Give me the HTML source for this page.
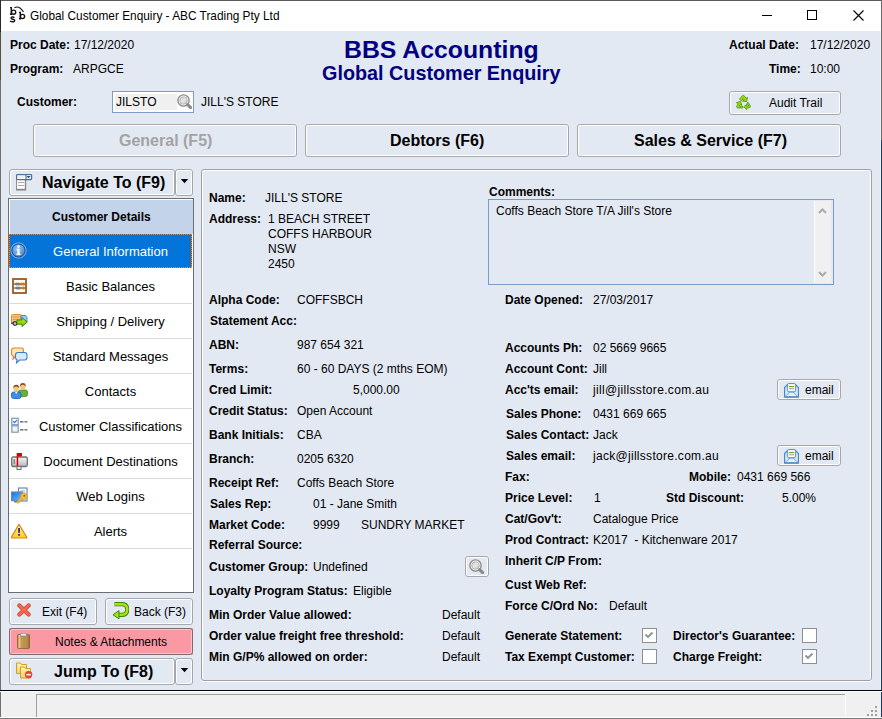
<!DOCTYPE html>
<html><head><meta charset="utf-8"><style>
html,body{margin:0;padding:0;width:882px;height:719px;overflow:hidden;}
body{position:relative;font-family:"Liberation Sans",sans-serif;color:#000;}
.r{position:absolute;}
.t{position:absolute;white-space:pre;line-height:1;}
</style></head><body>
<div class="r" style="left:0px;top:0px;width:882px;height:719px;background:#F0F0F0;"></div>
<div class="r" style="left:0px;top:0px;width:882px;height:31px;background:#FFFFFF;"></div>
<div class="r" style="left:0px;top:31px;width:882px;height:659px;background:#E3E9F3;"></div>
<div class="r" style="left:0px;top:0px;width:882px;height:1px;background:#5A5A5A;"></div>
<div class="r" style="left:0px;top:0px;width:1px;height:719px;background:#707070;"></div>
<div class="r" style="left:0px;top:0px;width:1px;height:32px;background:#2A2A2A;"></div>
<div class="r" style="left:0px;top:32px;width:1px;height:48px;background:#5A5238;"></div>
<div class="r" style="left:881px;top:0px;width:1px;height:140px;background:#6A6A6A;"></div>
<div class="r" style="left:881px;top:140px;width:1px;height:579px;background:#1E3A64;"></div>
<div class="r" style="left:880px;top:31px;width:1px;height:659px;background:#EEF3FB;"></div>
<div class="r" style="left:0px;top:690px;width:882px;height:1px;background:#000;"></div>
<div class="r" style="left:0px;top:691px;width:882px;height:1px;background:#FFF;"></div>
<div class="r" style="left:0px;top:717px;width:882px;height:1px;background:#FFF;"></div>
<div class="r" style="left:0px;top:718px;width:882px;height:1px;background:#7A7A7A;"></div>
<svg class="r" style="left:6px;top:4px" width="24" height="22" viewBox="0 0 24 22"><g fill="none" stroke="#111" stroke-width="1.4"><path d="M4 3.6 H5.3 V10.3 H4"/><circle cx="7.6" cy="8.2" r="2.1"/><path d="M13 8.4 H14.3 V14.7 H13"/><circle cx="16.5" cy="12.5" r="2.1"/><path d="M8.5 3.8 Q13 1 17.5 8" stroke-width="1.2"/><path d="M8.5 13.6 Q7 12.6 5.5 13.2 Q4.3 14.2 6 15 L8 15.6 Q9.5 16.6 8 17.6 Q6 18.2 4 17"/></g></svg>
<div class="t" style="left:30px;top:11px;font-size:11.85px;color:#000;">Global Customer Enquiry - ABC Trading Pty Ltd</div>
<div class="r" style="left:762px;top:15px;width:10px;height:1px;background:#000;"></div>
<div class="r" style="left:807px;top:10px;width:10px;height:10px;border:1px solid #000;box-sizing:border-box;"></div>
<svg class="r" style="left:853px;top:10px" width="11" height="11" viewBox="0 0 11 11"><path d="M0.5 0.5 L10.5 10.5 M10.5 0.5 L0.5 10.5" stroke="#000" stroke-width="1.1"/></svg>
<div class="t" style="left:10px;top:39px;font-size:12px;font-weight:bold;">Proc Date:</div>
<div class="t" style="left:74px;top:39px;font-size:12px;">17/12/2020</div>
<div class="t" style="left:10px;top:63px;font-size:12px;font-weight:bold;">Program:</div>
<div class="t" style="left:73px;top:63px;font-size:12px;">ARPGCE</div>
<div class="t" style="left:344px;top:38px;font-size:24.8px;font-weight:bold;color:#000080;">BBS Accounting</div>
<div class="t" style="left:322px;top:64px;font-size:19.8px;font-weight:bold;color:#000080;">Global Customer Enquiry</div>
<div class="t" style="left:729px;top:39px;font-size:12px;font-weight:bold;">Actual Date:</div>
<div class="t" style="left:810px;top:39px;font-size:12px;">17/12/2020</div>
<div class="t" style="left:769px;top:63px;font-size:12px;font-weight:bold;">Time:</div>
<div class="t" style="left:810px;top:63px;font-size:12px;">10:00</div>
<div class="t" style="left:17px;top:96px;font-size:12px;font-weight:bold;">Customer:</div>
<div class="r" style="left:112px;top:91px;width:82px;height:22px;border:1px solid #7A9CC6;box-sizing:border-box;background:#FFF;"></div>
<div class="r" style="left:115px;top:94px;width:62px;height:16px;background:#F0F0F0;"></div>
<div class="t" style="left:116px;top:96px;font-size:12px;">JILSTO</div>
<div class="t" style="left:201px;top:96px;font-size:12px;">JILL'S STORE</div>
<div class="r" style="left:729px;top:91px;width:112px;height:24px;border:1px solid #A8A8A8;border-radius:3px;box-sizing:border-box;background:#E3E9F3;box-shadow:inset 1px 1px 0 #FFF, inset -1px -1px 0 #FFF;"></div>
<div class="t" style="left:769px;top:97px;font-size:12px;">Audit Trail</div>
<div class="r" style="left:33px;top:124px;width:264px;height:33px;border:1px solid #A8A8A8;border-radius:3px;box-sizing:border-box;background:#E3E9F3;box-shadow:inset 1px 1px 0 #FFF, inset -1px -1px 0 #FFF;"></div>
<div class="r" style="left:305px;top:124px;width:264px;height:33px;border:1px solid #A8A8A8;border-radius:3px;box-sizing:border-box;background:#E3E9F3;box-shadow:inset 1px 1px 0 #FFF, inset -1px -1px 0 #FFF;"></div>
<div class="r" style="left:577px;top:124px;width:264px;height:33px;border:1px solid #A8A8A8;border-radius:3px;box-sizing:border-box;background:#E3E9F3;box-shadow:inset 1px 1px 0 #FFF, inset -1px -1px 0 #FFF;"></div>
<div class="t" style="left:119px;top:133px;font-size:16px;font-weight:bold;color:#A3A3A3;">General (F5)</div>
<div class="t" style="left:390px;top:133px;font-size:16px;font-weight:bold;">Debtors (F6)</div>
<div class="t" style="left:634px;top:133px;font-size:16px;font-weight:bold;">Sales &amp; Service (F7)</div>
<div class="r" style="left:9px;top:169px;width:166px;height:27px;border:1px solid #A8A8A8;border-radius:3px;box-sizing:border-box;background:#E3E9F3;box-shadow:inset 1px 1px 0 #FFF, inset -1px -1px 0 #FFF;"></div>
<div class="r" style="left:175px;top:169px;width:18px;height:27px;border:1px solid #A8A8A8;border-radius:3px;box-sizing:border-box;background:#E3E9F3;box-shadow:inset 1px 1px 0 #FFF, inset -1px -1px 0 #FFF;"></div>
<div class="t" style="left:42px;top:175px;font-size:16px;font-weight:bold;">Navigate To (F9)</div>
<svg class="r" style="left:180px;top:179px" width="9" height="5"><path d="M0.8 0 H8.2 L4.5 4.2Z" fill="#000"/></svg>
<div class="r" style="left:8px;top:198px;width:186px;height:395px;border:1px solid #6D6D6D;box-sizing:border-box;background:#FFF;"></div>
<div class="r" style="left:9px;top:199px;width:184px;height:35px;background:#C3D3E9;box-shadow:inset 1px 1px 0 #FFF;"></div>
<div class="t" style="left:52px;top:211px;font-size:12px;font-weight:bold;">Customer Details</div>
<div class="r" style="left:9px;top:234px;width:183px;height:34px;background:#0574D8;"></div>
<div class="r" style="left:9px;top:234px;width:183px;height:1px;background:repeating-linear-gradient(90deg,#FF8A1E 0 1px,transparent 1px 2px);"></div>
<div class="r" style="left:9px;top:267px;width:183px;height:1px;background:repeating-linear-gradient(90deg,#FF8A1E 0 1px,transparent 1px 2px);"></div>
<div class="r" style="left:9px;top:234px;width:1px;height:34px;background:repeating-linear-gradient(180deg,#FF8A1E 0 1px,transparent 1px 2px);"></div>
<div class="r" style="left:191px;top:234px;width:1px;height:34px;background:repeating-linear-gradient(180deg,#FF8A1E 0 1px,transparent 1px 2px);"></div>
<div class="t" style="left:29px;width:163px;text-align:center;top:245px;font-size:13px;color:#FFF">General Information</div>
<div class="r" style="left:9px;top:303px;width:183px;height:1px;background:#DADADA;"></div>
<div class="t" style="left:29px;width:163px;text-align:center;top:280px;font-size:13px;color:#000">Basic Balances</div>
<div class="r" style="left:9px;top:338px;width:183px;height:1px;background:#DADADA;"></div>
<div class="t" style="left:29px;width:163px;text-align:center;top:315px;font-size:13px;color:#000">Shipping / Delivery</div>
<div class="r" style="left:9px;top:373px;width:183px;height:1px;background:#DADADA;"></div>
<div class="t" style="left:29px;width:163px;text-align:center;top:350px;font-size:13px;color:#000">Standard Messages</div>
<div class="r" style="left:9px;top:408px;width:183px;height:1px;background:#DADADA;"></div>
<div class="t" style="left:29px;width:163px;text-align:center;top:385px;font-size:13px;color:#000">Contacts</div>
<div class="r" style="left:9px;top:443px;width:183px;height:1px;background:#DADADA;"></div>
<div class="t" style="left:29px;width:163px;text-align:center;top:420px;font-size:13px;color:#000">Customer Classifications</div>
<div class="r" style="left:9px;top:478px;width:183px;height:1px;background:#DADADA;"></div>
<div class="t" style="left:29px;width:163px;text-align:center;top:455px;font-size:13px;color:#000">Document Destinations</div>
<div class="r" style="left:9px;top:513px;width:183px;height:1px;background:#DADADA;"></div>
<div class="t" style="left:29px;width:163px;text-align:center;top:490px;font-size:13px;color:#000">Web Logins</div>
<div class="r" style="left:9px;top:548px;width:183px;height:1px;background:#DADADA;"></div>
<div class="t" style="left:29px;width:163px;text-align:center;top:525px;font-size:13px;color:#000">Alerts</div>
<div class="r" style="left:9px;top:598px;width:88px;height:27px;border:1px solid #A8A8A8;border-radius:3px;box-sizing:border-box;background:#E3E9F3;box-shadow:inset 1px 1px 0 #FFF, inset -1px -1px 0 #FFF;"></div>
<div class="r" style="left:105px;top:598px;width:88px;height:27px;border:1px solid #A8A8A8;border-radius:3px;box-sizing:border-box;background:#E3E9F3;box-shadow:inset 1px 1px 0 #FFF, inset -1px -1px 0 #FFF;"></div>
<div class="r" style="left:9px;top:628px;width:184px;height:27px;background:#FA98A3;"></div>
<div class="r" style="left:9px;top:628px;width:184px;height:27px;border:1px solid #7C6A6C;border-radius:3px;box-sizing:border-box;box-shadow:inset 1px 1px 0 #FFC4CC, inset -1px -1px 0 #FFC4CC;"></div>
<div class="r" style="left:9px;top:658px;width:166px;height:27px;border:1px solid #A8A8A8;border-radius:3px;box-sizing:border-box;background:#E3E9F3;box-shadow:inset 1px 1px 0 #FFF, inset -1px -1px 0 #FFF;"></div>
<div class="r" style="left:175px;top:658px;width:18px;height:27px;border:1px solid #A8A8A8;border-radius:3px;box-sizing:border-box;background:#E3E9F3;box-shadow:inset 1px 1px 0 #FFF, inset -1px -1px 0 #FFF;"></div>
<div class="t" style="left:42px;top:606px;font-size:12px;">Exit (F4)</div>
<div class="t" style="left:134px;top:606px;font-size:12px;">Back (F3)</div>
<div class="t" style="left:55px;top:636px;font-size:12px;">Notes &amp; Attachments</div>
<div class="t" style="left:54px;top:664px;font-size:16px;font-weight:bold;">Jump To (F8)</div>
<svg class="r" style="left:180px;top:668px" width="9" height="5"><path d="M0.8 0 H8.2 L4.5 4.2Z" fill="#000"/></svg>
<div class="r" style="left:201px;top:169px;width:671px;height:512px;border:1px solid #A0A0A0;border-radius:3px;box-sizing:border-box;box-shadow:inset 1px 1px 0 #FFF, inset -1px 0 0 #FFF, 0 1px 0 #FFF;"></div>
<div class="t" style="left:209px;top:192px;font-size:12px;font-weight:bold;">Name:</div>
<div class="t" style="left:265px;top:192px;font-size:12px;">JILL'S STORE</div>
<div class="t" style="left:209px;top:213px;font-size:12px;font-weight:bold;">Address:</div>
<div class="t" style="left:268px;top:213px;font-size:12px;">1 BEACH STREET</div>
<div class="t" style="left:268px;top:228px;font-size:12px;">COFFS HARBOUR</div>
<div class="t" style="left:268px;top:243px;font-size:12px;">NSW</div>
<div class="t" style="left:268px;top:258px;font-size:12px;">2450</div>
<div class="t" style="left:209px;top:294px;font-size:12px;font-weight:bold;">Alpha Code:</div>
<div class="t" style="left:297px;top:294px;font-size:12px;">COFFSBCH</div>
<div class="t" style="left:210px;top:315px;font-size:12px;font-weight:bold;">Statement Acc:</div>
<div class="t" style="left:209px;top:339px;font-size:12px;font-weight:bold;">ABN:</div>
<div class="t" style="left:297px;top:339px;font-size:12px;">987 654 321</div>
<div class="t" style="left:209px;top:363px;font-size:12px;font-weight:bold;">Terms:</div>
<div class="t" style="left:297px;top:363px;font-size:12px;">60 - 60 DAYS (2 mths EOM)</div>
<div class="t" style="left:209px;top:384px;font-size:12px;font-weight:bold;">Cred Limit:</div>
<div class="t" style="left:353px;top:384px;font-size:12px;">5,000.00</div>
<div class="t" style="left:209px;top:405px;font-size:12px;font-weight:bold;">Credit Status:</div>
<div class="t" style="left:297px;top:405px;font-size:12px;">Open Account</div>
<div class="t" style="left:209px;top:429px;font-size:12px;font-weight:bold;">Bank Initials:</div>
<div class="t" style="left:297px;top:429px;font-size:12px;">CBA</div>
<div class="t" style="left:209px;top:453px;font-size:12px;font-weight:bold;">Branch:</div>
<div class="t" style="left:297px;top:453px;font-size:12px;">0205 6320</div>
<div class="t" style="left:209px;top:477px;font-size:12px;font-weight:bold;">Receipt Ref:</div>
<div class="t" style="left:297px;top:477px;font-size:12px;">Coffs Beach Store</div>
<div class="t" style="left:210px;top:498px;font-size:12px;font-weight:bold;">Sales Rep:</div>
<div class="t" style="left:313px;top:498px;font-size:12px;">01 - Jane Smith</div>
<div class="t" style="left:209px;top:519px;font-size:12px;font-weight:bold;">Market Code:</div>
<div class="t" style="left:313px;top:519px;font-size:12px;">9999</div>
<div class="t" style="left:361px;top:519px;font-size:12px;">SUNDRY MARKET</div>
<div class="t" style="left:209px;top:539px;font-size:12px;font-weight:bold;">Referral Source:</div>
<div class="t" style="left:209px;top:561px;font-size:12px;font-weight:bold;">Customer Group:</div>
<div class="t" style="left:313px;top:561px;font-size:12px;">Undefined</div>
<div class="r" style="left:465px;top:556px;width:24px;height:21px;border:1px solid #A8A8A8;border-radius:3px;box-sizing:border-box;background:#E3E9F3;box-shadow:inset 1px 1px 0 #FFF, inset -1px -1px 0 #FFF;"></div>
<div class="t" style="left:209px;top:585px;font-size:12px;font-weight:bold;">Loyalty Program Status:</div>
<div class="t" style="left:353px;top:585px;font-size:12px;">Eligible</div>
<div class="t" style="left:209px;top:609px;font-size:12px;font-weight:bold;">Min Order Value allowed:</div>
<div class="t" style="left:442px;top:609px;font-size:12px;">Default</div>
<div class="t" style="left:209px;top:630px;font-size:12px;font-weight:bold;">Order value freight free threshold:</div>
<div class="t" style="left:442px;top:630px;font-size:12px;">Default</div>
<div class="t" style="left:209px;top:651px;font-size:12px;font-weight:bold;">Min G/P% allowed on order:</div>
<div class="t" style="left:442px;top:651px;font-size:12px;">Default</div>
<div class="t" style="left:489px;top:186px;font-size:12px;font-weight:bold;">Comments:</div>
<div class="r" style="left:488px;top:199px;width:346px;height:86px;border:1px solid #7A9CC6;box-sizing:border-box;background:#E3E9F3;"></div>
<div class="r" style="left:814px;top:201px;width:1px;height:82px;background:#FFF;"></div>
<div class="r" style="left:815px;top:201px;width:16px;height:82px;background:#F0F0F0;"></div>
<svg class="r" style="left:818px;top:207px" width="10" height="8"><path d="M1 6 L4.5 2.5 L8 6" stroke="#ABABAB" stroke-width="2" fill="none"/></svg>
<svg class="r" style="left:818px;top:270px" width="10" height="8"><path d="M1 2 L4.5 5.5 L8 2" stroke="#ABABAB" stroke-width="2" fill="none"/></svg>
<div class="t" style="left:496px;top:205px;font-size:12px;">Coffs Beach Store T/A Jill's Store</div>
<div class="t" style="left:505px;top:294px;font-size:12px;font-weight:bold;">Date Opened:</div>
<div class="t" style="left:593px;top:294px;font-size:12px;">27/03/2017</div>
<div class="t" style="left:505px;top:342px;font-size:12px;font-weight:bold;">Accounts Ph:</div>
<div class="t" style="left:593px;top:342px;font-size:12px;">02 5669 9665</div>
<div class="t" style="left:505px;top:363px;font-size:12px;font-weight:bold;">Account Cont:</div>
<div class="t" style="left:593px;top:363px;font-size:12px;">Jill</div>
<div class="t" style="left:505px;top:384px;font-size:12px;font-weight:bold;">Acc'ts email:</div>
<div class="t" style="left:593px;top:384px;font-size:12px;letter-spacing:0.33px;">jill@jillsstore.com.au</div>
<div class="t" style="left:506px;top:408px;font-size:12px;font-weight:bold;">Sales Phone:</div>
<div class="t" style="left:593px;top:408px;font-size:12px;">0431 669 665</div>
<div class="t" style="left:506px;top:429px;font-size:12px;font-weight:bold;">Sales Contact:</div>
<div class="t" style="left:593px;top:429px;font-size:12px;">Jack</div>
<div class="t" style="left:506px;top:450px;font-size:12px;font-weight:bold;">Sales email:</div>
<div class="t" style="left:593px;top:450px;font-size:12px;letter-spacing:0.29px;">jack@jillsstore.com.au</div>
<div class="r" style="left:777px;top:379px;width:64px;height:21px;border:1px solid #A8A8A8;border-radius:3px;box-sizing:border-box;background:#E3E9F3;box-shadow:inset 1px 1px 0 #FFF, inset -1px -1px 0 #FFF;"></div>
<div class="t" style="left:805px;top:384px;font-size:12px;">email</div>
<div class="r" style="left:777px;top:445px;width:64px;height:21px;border:1px solid #A8A8A8;border-radius:3px;box-sizing:border-box;background:#E3E9F3;box-shadow:inset 1px 1px 0 #FFF, inset -1px -1px 0 #FFF;"></div>
<div class="t" style="left:805px;top:450px;font-size:12px;">email</div>
<div class="t" style="left:505px;top:471px;font-size:12px;font-weight:bold;">Fax:</div>
<div class="t" style="left:689px;top:471px;font-size:12px;font-weight:bold;">Mobile:</div>
<div class="t" style="left:737px;top:471px;font-size:12px;">0431 669 566</div>
<div class="t" style="left:505px;top:492px;font-size:12px;font-weight:bold;">Price Level:</div>
<div class="t" style="left:594px;top:492px;font-size:12px;">1</div>
<div class="t" style="left:666px;top:492px;font-size:12px;font-weight:bold;">Std Discount:</div>
<div class="t" style="left:782px;top:492px;font-size:12px;">5.00%</div>
<div class="t" style="left:505px;top:513px;font-size:12px;font-weight:bold;">Cat/Gov't:</div>
<div class="t" style="left:593px;top:513px;font-size:12px;">Catalogue Price</div>
<div class="t" style="left:505px;top:534px;font-size:12px;font-weight:bold;">Prod Contract:</div>
<div class="t" style="left:593px;top:534px;font-size:12px;">K2017&nbsp; - Kitchenware 2017</div>
<div class="t" style="left:505px;top:555px;font-size:12px;font-weight:bold;">Inherit C/P From:</div>
<div class="t" style="left:505px;top:579px;font-size:12px;font-weight:bold;">Cust Web Ref:</div>
<div class="t" style="left:505px;top:600px;font-size:12px;font-weight:bold;">Force C/Ord No:</div>
<div class="t" style="left:609px;top:600px;font-size:12px;">Default</div>
<div class="t" style="left:505px;top:630px;font-size:12px;font-weight:bold;">Generate Statement:</div>
<div class="t" style="left:673px;top:630px;font-size:12px;font-weight:bold;">Director's Guarantee:</div>
<div class="t" style="left:505px;top:651px;font-size:12px;font-weight:bold;">Tax Exempt Customer:</div>
<div class="t" style="left:673px;top:651px;font-size:12px;font-weight:bold;">Charge Freight:</div>
<div class="r" style="left:642px;top:628px;width:15px;height:15px;border:1px solid #8F8F8F;box-sizing:border-box;background:#FFF;"></div>
<svg class="r" style="left:642px;top:628px" width="15" height="15"><path d="M3.5 6.5 L6 9 L10.5 4.5" stroke="#909090" stroke-width="1.8" fill="none"/></svg>
<div class="r" style="left:802px;top:628px;width:15px;height:15px;border:1px solid #8F8F8F;box-sizing:border-box;background:#FFF;"></div>
<div class="r" style="left:642px;top:649px;width:15px;height:15px;border:1px solid #8F8F8F;box-sizing:border-box;background:#FFF;"></div>
<div class="r" style="left:802px;top:649px;width:15px;height:15px;border:1px solid #8F8F8F;box-sizing:border-box;background:#FFF;"></div>
<svg class="r" style="left:802px;top:649px" width="15" height="15"><path d="M3.5 6.5 L6 9 L10.5 4.5" stroke="#909090" stroke-width="1.8" fill="none"/></svg>
<div class="r" style="left:36px;top:694px;width:809px;height:23px;border-left:1px solid #A0A0A0;border-top:1px solid #A0A0A0;box-sizing:border-box;"></div>
<div class="r" style="left:845px;top:694px;width:1px;height:23px;background:#FFF;"></div>
<div class="r" style="left:875px;top:706px;width:2px;height:2px;background:#A0A0A0;"></div>
<div class="r" style="left:871px;top:710px;width:2px;height:2px;background:#A0A0A0;"></div>
<div class="r" style="left:875px;top:710px;width:2px;height:2px;background:#A0A0A0;"></div>
<div class="r" style="left:867px;top:714px;width:2px;height:2px;background:#A0A0A0;"></div>
<div class="r" style="left:871px;top:714px;width:2px;height:2px;background:#A0A0A0;"></div>
<div class="r" style="left:875px;top:714px;width:2px;height:2px;background:#A0A0A0;"></div>
<svg width="0" height="0" style="position:absolute"><defs>
<linearGradient id="gmag" x1="0" y1="0" x2="1" y2="1"><stop offset="0" stop-color="#C8C8C8"/><stop offset="0.5" stop-color="#E6E6E6"/><stop offset="1" stop-color="#C0C0C0"/></linearGradient>
<radialGradient id="ginfo" cx="45%" cy="40%" r="65%"><stop offset="0" stop-color="#9CC4EC"/><stop offset="0.7" stop-color="#5E98D4"/><stop offset="1" stop-color="#2F6AB0"/></radialGradient>
<linearGradient id="ggreen" x1="0" y1="0" x2="0" y2="1"><stop offset="0" stop-color="#B8EA2A"/><stop offset="1" stop-color="#7CC00A"/></linearGradient>
<linearGradient id="gclip" x1="0" y1="0" x2="1" y2="0"><stop offset="0" stop-color="#A87838"/><stop offset="0.15" stop-color="#E8C890"/><stop offset="0.3" stop-color="#C89858"/><stop offset="0.85" stop-color="#B88848"/><stop offset="1" stop-color="#8A6030"/></linearGradient>
<linearGradient id="gfold" x1="0" y1="0" x2="0" y2="1"><stop offset="0" stop-color="#FFF4B8"/><stop offset="1" stop-color="#F5D060"/></linearGradient>
<linearGradient id="gtri" x1="0" y1="0" x2="0" y2="1"><stop offset="0" stop-color="#FFF0A0"/><stop offset="1" stop-color="#FFCC20"/></linearGradient>
<linearGradient id="gmon" x1="0" y1="0" x2="1" y2="1"><stop offset="0" stop-color="#1070E0"/><stop offset="1" stop-color="#70C0FF"/></linearGradient>
<linearGradient id="gmail" x1="0" y1="0" x2="0" y2="1"><stop offset="0" stop-color="#F8F8F8"/><stop offset="1" stop-color="#B8B8BC"/></linearGradient>
</defs></svg>
<svg class="r" style="left:177px;top:94px" width="15" height="15" viewBox="0 0 15 15"><circle cx="6.5" cy="6.5" r="5.6" fill="#FFF" stroke="#8C8C8C" stroke-width="1.4"/><circle cx="6.5" cy="6.5" r="3.8" fill="url(#gmag)" stroke="#A8A8A8" stroke-width="0.8"/><path d="M10.6 10.6 L13.6 13.6" stroke="#8A8A8A" stroke-width="3" stroke-linecap="round"/></svg>
<svg class="r" style="left:469px;top:559px" width="15" height="15" viewBox="0 0 15 15"><circle cx="6.5" cy="6.5" r="5.6" fill="#FFF" stroke="#8C8C8C" stroke-width="1.4"/><circle cx="6.5" cy="6.5" r="3.8" fill="url(#gmag)" stroke="#A8A8A8" stroke-width="0.8"/><path d="M10.6 10.6 L13.6 13.6" stroke="#8A8A8A" stroke-width="3" stroke-linecap="round"/></svg>
<svg class="r" style="left:735px;top:94px" width="17" height="17" viewBox="0 0 17 17"><g stroke="#4E9A06" stroke-width="0.8" fill="#9ED60E" stroke-linejoin="round">
<path d="M4.5 5.2 L7.2 1.8 Q8.2 1 9.2 1.8 L11 4.3 L12.6 3.4 L11.6 7.6 L7.6 7.2 L9.2 6.2 L8.2 4.6 L6.6 7 Z"/>
<path d="M13 8.2 L15.4 12 Q15.8 13.4 14.4 13.8 L11.6 14 L11.8 15.8 L8.8 12.8 L11.6 10.2 L11.6 12 L13.6 12 L12 9 Z"/>
<path d="M7.8 14 L3 14 Q1.6 13.8 1.6 12.6 L3 9.4 L1.4 8.6 L5.6 7.4 L6.8 11.4 L5.2 10.6 L4.2 12.4 L7.8 12.4 Z"/></g></svg>
<svg class="r" style="left:16px;top:174px" width="17" height="17" viewBox="0 0 17 17"><rect x="0.5" y="5.5" width="9" height="10.5" fill="#FFF" stroke="#8E8E8E"/><path d="M0.5 15.5 H9.5 V5.5" stroke="#8A8A8A" stroke-width="1.4" fill="none"/><path d="M2 8.5 H8 M2 11.5 H8" stroke="#A8A8A8" stroke-width="1"/>
<rect x="0.6" y="0.6" width="15" height="5" rx="0.8" fill="#FFF" stroke="#4F6E96" stroke-width="1.2"/><rect x="10" y="1.2" width="5" height="3.8" fill="#D8ECFA"/><path d="M10 0.6 V5.6" stroke="#4F6E96" stroke-width="1.2"/><path d="M10.8 2 H14.4 L12.6 4 Z" fill="#1E3A66"/><path d="M2 3 H8" stroke="#E0E0E0"/></svg>
<svg class="r" style="left:10px;top:242px" width="17" height="17" viewBox="0 0 17 17"><circle cx="8.5" cy="8.5" r="7.6" fill="none" stroke="#9FC0E4" stroke-width="1"/><circle cx="8.5" cy="8.5" r="6.6" fill="url(#ginfo)" stroke="#1F4F9A" stroke-width="1"/><circle cx="8.5" cy="4.6" r="1.3" fill="#FFF"/><path d="M6.6 6.8 H9.6 V11.8 H10.6 V13 H6.4 V11.8 H7.4 V8 H6.6 Z" fill="#FFF"/></svg>
<svg class="r" style="left:12px;top:278px" width="15" height="16" viewBox="0 0 15 16"><rect x="1" y="1" width="13" height="14" fill="#FFF" stroke="#9A5A22" stroke-width="1.8"/>
<path d="M2 6 H13 M2 10 H13" stroke="#1E2A3A" stroke-width="0.9"/>
<ellipse cx="4.5" cy="6" rx="1.7" ry="1.5" fill="#7C7C7C"/><ellipse cx="6.7" cy="6" rx="1.7" ry="1.5" fill="#7C7C7C"/>
<ellipse cx="9.4" cy="6" rx="1.7" ry="1.5" fill="#D07812"/><ellipse cx="11.5" cy="6" rx="1.7" ry="1.5" fill="#D07812"/>
<ellipse cx="5.2" cy="10" rx="1.7" ry="1.5" fill="#7C7C7C"/><ellipse cx="7.4" cy="10" rx="1.7" ry="1.5" fill="#7C7C7C"/>
<ellipse cx="11.3" cy="10" rx="1.7" ry="1.5" fill="#D07812"/></svg>
<svg class="r" style="left:11px;top:313px" width="17" height="15" viewBox="0 0 17 15"><rect x="0.5" y="1.5" width="9.5" height="8.5" rx="1" fill="#FAC27A" stroke="#E08A2C"/><path d="M2 4 H8.5 M2 6.5 H8.5" stroke="#F08A3A" stroke-width="0.9"/>
<path d="M10 2.5 H14.5 L16 4.5 V9 H10 Z" fill="#8ED0FA" stroke="#3A90DA"/>
<rect x="0" y="9.5" width="5" height="1.5" fill="#556"/><circle cx="4" cy="10.5" r="1.8" fill="#CCD" stroke="#334" stroke-width="1.2"/>
<path d="M6 7 H11 V4.6 L16.2 9 L11 13.6 V11.2 H6 Z" fill="url(#ggreen)" stroke="#3A8A00" stroke-width="1"/></svg>
<svg class="r" style="left:11px;top:347px" width="17" height="17" viewBox="0 0 17 17"><path d="M3 1 H10 Q12.5 1 12.5 3.5 V7 Q12.5 9.5 10 9.5 H4.5 L2 12 L2.6 9.2 Q0.5 8.6 0.5 6.5 V3.5 Q0.5 1 3 1 Z" fill="#FFE9A8" stroke="#F0783A" stroke-width="1.1"/>
<path d="M7 5.5 H13.5 Q16 5.5 16 8 V10.5 Q16 13 13.5 13 H8.5 L5.5 15.8 L6 12.8 Q4.5 12.2 4.5 10.5 V8 Q4.5 5.5 7 5.5 Z" fill="#D4ECFF" stroke="#3A7CCC" stroke-width="1.1"/></svg>
<svg class="r" style="left:11px;top:382px" width="17" height="17" viewBox="0 0 17 17"><rect x="7.5" y="8" width="9" height="6.5" rx="2" fill="#6FAF30" stroke="#4A8A1A" stroke-width="0.8"/><circle cx="11.8" cy="4.6" r="2.9" fill="#F2C880"/><path d="M8.8 4.4 Q9 1 11.8 1 Q14.8 1 14.8 4.4 Q13.5 2.6 11.8 2.8 Q10 2.6 8.8 4.4Z" fill="#8A4A10"/>
<rect x="0.5" y="10" width="9.5" height="6.5" rx="2" fill="#3E8EE6" stroke="#1A5EC0" stroke-width="0.8"/><path d="M4 10 L5.2 12 L6.5 10Z" fill="#FFF"/><circle cx="5.2" cy="6.4" r="2.9" fill="#F2C880"/><path d="M2.2 6.2 Q2.4 2.8 5.2 2.8 Q8.2 2.8 8.2 6.2 Q6.9 4.4 5.2 4.6 Q3.4 4.4 2.2 6.2Z" fill="#8A4A10"/></svg>
<svg class="r" style="left:11px;top:417px" width="17" height="17" viewBox="0 0 17 17"><rect x="0.8" y="1.3" width="6.4" height="6.4" fill="#F6FAFE" stroke="#8095B5" stroke-width="1.2"/><rect x="0.8" y="8.8" width="6.4" height="6.4" fill="#EEF4FA" stroke="#8095B5" stroke-width="1.2"/>
<path d="M2.2 4.2 L3.6 5.6 L6 3" stroke="#2070C8" stroke-width="1.1" fill="none"/>
<rect x="9" y="4" width="3.5" height="1.6" fill="#7A7A7A"/><rect x="13.5" y="4" width="2.8" height="1.6" fill="#7A7A7A"/><rect x="9" y="12" width="3.5" height="1.6" fill="#7A7A7A"/><rect x="13.5" y="12" width="2.8" height="1.6" fill="#7A7A7A"/></svg>
<svg class="r" style="left:11px;top:452px" width="17" height="18" viewBox="0 0 17 18"><rect x="0.7" y="5" width="15.6" height="9.5" rx="1.5" fill="url(#gmail)" stroke="#707070" stroke-width="1.3"/><rect x="6" y="14.5" width="4" height="3" fill="#EEE" stroke="#707070" stroke-width="1"/><rect x="2.5" y="7" width="1.6" height="5" fill="#8A8A8A"/>
<path d="M5.7 1 H10.6 Q11 1 11 1.8 V3.6 Q11 4.4 10.3 4.4 H7.2 V14 H5.7 Z" fill="#E00000"/></svg>
<svg class="r" style="left:11px;top:487px" width="17" height="17" viewBox="0 0 17 17"><rect x="7.5" y="1" width="8.5" height="13" fill="#FFF" stroke="#6F88A8" stroke-width="1.2"/><path d="M9.5 4 H14 M9.5 6 H14" stroke="#9AAAC0" stroke-width="1"/>
<rect x="0.6" y="5" width="10.5" height="8.6" fill="url(#gmon)" stroke="#6F88A8" stroke-width="1.2"/><rect x="3" y="13.6" width="6" height="2" fill="#6F88A8"/>
<circle cx="12.8" cy="9.4" r="3.2" fill="#F6C040" stroke="#D39A18" stroke-width="0.8"/><rect x="12.5" y="8" width="1.6" height="1.6" fill="#8A5010"/><path d="M10.8 11.6 L7 15.4" stroke="#F0B030" stroke-width="2.6" stroke-linecap="round"/></svg>
<svg class="r" style="left:11px;top:523px" width="17" height="16" viewBox="0 0 17 16"><path d="M8 1.2 L15.8 14.2 Q16 15 15.2 15 H0.8 Q0 15 0.3 14.2 Z" fill="url(#gtri)" stroke="#D8841C" stroke-width="1.2" stroke-linejoin="round"/><rect x="7.2" y="5" width="1.7" height="4.8" fill="#1A2A78"/><rect x="7.2" y="11" width="1.7" height="1.8" fill="#1A2A78"/></svg>
<svg class="r" style="left:17px;top:603px" width="14" height="14" viewBox="0 0 14 14"><path d="M2.4 2.4 L11.6 11.6 M11.6 2.4 L2.4 11.6" stroke="#D9442C" stroke-width="4.2" stroke-linecap="round"/><path d="M2.4 2.4 L11.6 11.6 M11.6 2.4 L2.4 11.6" stroke="#F26A52" stroke-width="2.6" stroke-linecap="round"/></svg>
<svg class="r" style="left:112px;top:602px" width="17" height="17" viewBox="0 0 17 17"><path d="M2.5 2.2 H10 Q15.2 2.2 15.2 7.5 Q15.2 12.8 10 12.8 H6.5" fill="none" stroke="#3A8A00" stroke-width="4.2"/><path d="M2.5 2.2 H10 Q15.2 2.2 15.2 7.5 Q15.2 12.8 10 12.8 H6.5" fill="none" stroke="#A8E01A" stroke-width="2.4"/>
<path d="M7 8.6 L1 12.8 L7 16.8 Z" fill="#A8E01A" stroke="#3A8A00" stroke-width="1" stroke-linejoin="round"/></svg>
<svg class="r" style="left:17px;top:633px" width="13" height="16" viewBox="0 0 13 16"><rect x="0.5" y="1.5" width="12" height="14" rx="1" fill="url(#gclip)" stroke="#8A6030" stroke-width="0.8"/><rect x="3.5" y="0.3" width="6" height="2.8" rx="0.8" fill="#E8EEF4" stroke="#7A8898" stroke-width="0.8"/></svg>
<svg class="r" style="left:16px;top:662px" width="17" height="17" viewBox="0 0 17 17"><path d="M0.5 1 H4.5 L5.5 2.5 H10.5 V11.5 H0.5 Z" fill="url(#gfold)" stroke="#D89A28" stroke-width="1"/><path d="M4.5 5 H8.5 L9.5 6.5 H14.5 V16 H4.5 Z" fill="url(#gfold)" stroke="#D89A28" stroke-width="1"/>
<circle cx="12.6" cy="12.6" r="3.4" fill="#E84A30" stroke="#C8301A" stroke-width="0.6"/><rect x="10.4" y="11.9" width="4.4" height="1.5" fill="#FFF"/></svg>
<svg class="r" style="left:784px;top:382px" width="15" height="16" viewBox="0 0 15 16"><path d="M0.6 5.5 L3.5 2.5 H11.5 L14.4 5.5 V15 H0.6 Z" fill="#DDF0FC" stroke="#4A88C8" stroke-width="1.2"/><rect x="3.3" y="1.6" width="8.4" height="8.2" rx="1.5" fill="#FFF" stroke="#4A88C8" stroke-width="1"/><path d="M4.8 4.6 H10.2" stroke="#8FA010" stroke-width="1.2"/><path d="M4.8 6.8 H10.2" stroke="#A09890" stroke-width="1"/><path d="M1.5 14 L6 10 H9 L13.5 14" stroke="#6AA0D8" fill="none" stroke-width="0.9"/><path d="M0.6 15 H14.4" stroke="#5A88B8" stroke-width="1.4"/></svg>
<svg class="r" style="left:784px;top:448px" width="15" height="16" viewBox="0 0 15 16"><path d="M0.6 5.5 L3.5 2.5 H11.5 L14.4 5.5 V15 H0.6 Z" fill="#DDF0FC" stroke="#4A88C8" stroke-width="1.2"/><rect x="3.3" y="1.6" width="8.4" height="8.2" rx="1.5" fill="#FFF" stroke="#4A88C8" stroke-width="1"/><path d="M4.8 4.6 H10.2" stroke="#8FA010" stroke-width="1.2"/><path d="M4.8 6.8 H10.2" stroke="#A09890" stroke-width="1"/><path d="M1.5 14 L6 10 H9 L13.5 14" stroke="#6AA0D8" fill="none" stroke-width="0.9"/><path d="M0.6 15 H14.4" stroke="#5A88B8" stroke-width="1.4"/></svg>
</body></html>
